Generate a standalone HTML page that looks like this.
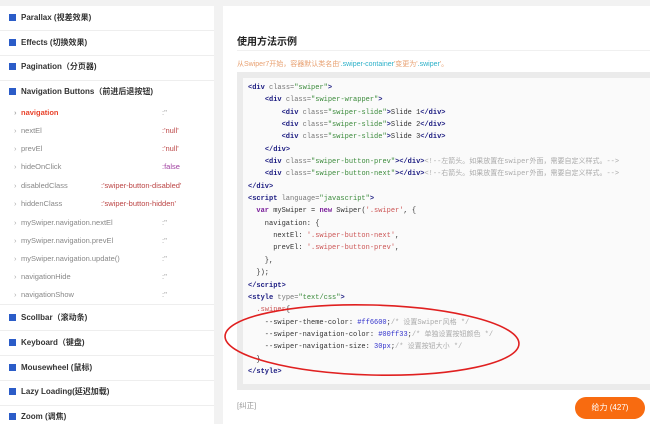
<!DOCTYPE html><html><head><meta charset="utf-8"><style>
*{margin:0;padding:0;box-sizing:border-box}
body{width:650px;height:424px;overflow:hidden;background:#f2f2f2;font-family:"Liberation Sans","Noto Sans CJK SC",sans-serif;position:relative}
#left{position:absolute;left:0;top:6px;width:214px;height:418px;background:#fff}
#right{position:absolute;left:223px;top:6px;width:427px;height:418px;background:#fff}
.sec{position:absolute;left:0;width:214px;font-size:8px;font-weight:bold;color:#333;padding-left:21px;line-height:12px}
.sec:before{content:"";position:absolute;left:9px;top:2px;width:7px;height:7px;background:#2b5cc8}
.line{position:absolute;left:0;width:214px;height:1px;background:#eee}
.it{position:absolute;left:21px;font-size:7.5px;color:#888;line-height:10px}
.it:before{content:"›";position:absolute;left:-7px;color:#aaa}
.v{position:absolute;font-size:7.5px;line-height:10px;color:#b44}
pre{font-family:"Liberation Mono","Noto Sans CJK SC",monospace;font-size:7px;line-height:12.35px;color:#333;font-weight:bold}
.t{color:#1a1a80}.a{color:#777;font-weight:normal}.s{color:#3a8a3a;font-weight:normal}.c{color:#aaa;font-weight:normal}.r{color:#c55;font-weight:normal}.n{font-weight:normal}.k{color:#7a1f9a}.b{color:#3333cc;font-weight:normal}
</style></head><body>
<div id="left">
<div class="sec" style="top:6px">Parallax (视差效果)</div><div class="line" style="top:24px"></div>
<div class="sec" style="top:31px">Effects (切换效果)</div><div class="line" style="top:49px"></div>
<div class="sec" style="top:55px">Pagination（分页器)</div><div class="line" style="top:74px"></div>
<div class="sec" style="top:80px">Navigation Buttons（前进后退按钮)</div>
<div class="it" style="top:102px;color:#e8432b;font-weight:bold">navigation</div><div class="v" style="top:102px;left:162px;color:#999">:''</div>
<div class="it" style="top:120px">nextEl</div><div class="v" style="top:120px;left:162px">:'null'</div>
<div class="it" style="top:138px">prevEl</div><div class="v" style="top:138px;left:162px">:'null'</div>
<div class="it" style="top:156px">hideOnClick</div><div class="v" style="top:156px;left:162px;color:#a040a0">:false</div>
<div class="it" style="top:175px">disabledClass</div><div class="v" style="top:175px;left:101px">:'swiper-button-disabled'</div>
<div class="it" style="top:193px">hiddenClass</div><div class="v" style="top:193px;left:101px">:'swiper-button-hidden'</div>
<div class="it" style="top:212px">mySwiper.navigation.nextEl</div><div class="v" style="top:212px;left:162px;color:#999">:''</div>
<div class="it" style="top:230px">mySwiper.navigation.prevEl</div><div class="v" style="top:230px;left:162px;color:#999">:''</div>
<div class="it" style="top:248px">mySwiper.navigation.update()</div><div class="v" style="top:248px;left:162px;color:#999">:''</div>
<div class="it" style="top:266px">navigationHide</div><div class="v" style="top:266px;left:162px;color:#999">:''</div>
<div class="it" style="top:284px">navigationShow</div><div class="v" style="top:284px;left:162px;color:#999">:''</div>
<div class="line" style="top:298px"></div>
<div class="sec" style="top:306px">Scollbar（滚动条)</div><div class="line" style="top:324px"></div>
<div class="sec" style="top:331px">Keyboard（键盘)</div><div class="line" style="top:349px"></div>
<div class="sec" style="top:356px">Mousewheel (鼠标)</div><div class="line" style="top:374px"></div>
<div class="sec" style="top:380px">Lazy Loading(延迟加载)</div><div class="line" style="top:399px"></div>
<div class="sec" style="top:405px">Zoom (调焦)</div>
</div>
<div id="right">
<div style="position:absolute;left:14px;top:27px;font-size:10px;font-weight:bold;color:#222">使用方法示例</div>
<div style="position:absolute;left:14px;top:44px;width:413px;height:1px;background:#f0f0f0"></div>
<div style="position:absolute;left:14px;top:53px;font-size:7px;color:#e8a070">从Swiper7开始，容器默认类名由'<span style="color:#2bb0c8">.swiper-container</span>'变更为'<span style="color:#2bb0c8">.swiper</span>'。</div>
<div style="position:absolute;left:14px;top:66px;width:413px;height:318px;background:#ebebeb;padding:6px 0 0 6px">
<div style="background:#fafafa;width:100%;height:306px;padding:4px 0 0 5px">
<pre><span class="t">&lt;div</span> <span class="a">class=</span><span class="s">"swiper"</span><span class="t">&gt;</span>
    <span class="t">&lt;div</span> <span class="a">class=</span><span class="s">"swiper-wrapper"</span><span class="t">&gt;</span>
        <span class="t">&lt;div</span> <span class="a">class=</span><span class="s">"swiper-slide"</span><span class="t">&gt;</span><span class="n">Slide 1</span><span class="t">&lt;/div&gt;</span>
        <span class="t">&lt;div</span> <span class="a">class=</span><span class="s">"swiper-slide"</span><span class="t">&gt;</span><span class="n">Slide 2</span><span class="t">&lt;/div&gt;</span>
        <span class="t">&lt;div</span> <span class="a">class=</span><span class="s">"swiper-slide"</span><span class="t">&gt;</span><span class="n">Slide 3</span><span class="t">&lt;/div&gt;</span>
    <span class="t">&lt;/div&gt;</span>
    <span class="t">&lt;div</span> <span class="a">class=</span><span class="s">"swiper-button-prev"</span><span class="t">&gt;&lt;/div&gt;</span><span class="c">&lt;!--左箭头。如果放置在swiper外面，需要自定义样式。--&gt;</span>
    <span class="t">&lt;div</span> <span class="a">class=</span><span class="s">"swiper-button-next"</span><span class="t">&gt;&lt;/div&gt;</span><span class="c">&lt;!--右箭头。如果放置在swiper外面，需要自定义样式。--&gt;</span>
<span class="t">&lt;/div&gt;</span>
<span class="t">&lt;script</span> <span class="a">language=</span><span class="s">"javascript"</span><span class="t">&gt;</span>
  <span class="k">var</span><span class="n"> mySwiper = </span><span class="k">new</span><span class="n"> Swiper(</span><span class="r">'.swiper'</span><span class="n">, {</span>
<span class="n">    navigation: {</span>
<span class="n">      nextEl: </span><span class="r">'.swiper-button-next'</span><span class="n">,</span>
<span class="n">      prevEl: </span><span class="r">'.swiper-button-prev'</span><span class="n">,</span>
<span class="n">    },</span>
<span class="n">  });</span>
<span class="t">&lt;/script&gt;</span>
<span class="t">&lt;style</span> <span class="a">type=</span><span class="s">"text/css"</span><span class="t">&gt;</span>
<span class="r">  .swiper</span><span class="n">{</span>
<span class="n">    --swiper-theme-color: </span><span class="b">#ff6600</span><span class="n">;</span><span class="c">/* 设置Swiper风格 */</span>
<span class="n">    --swiper-navigation-color: </span><span class="b">#00ff33</span><span class="n">;</span><span class="c">/* 单独设置按钮颜色 */</span>
<span class="n">    --swiper-navigation-size: </span><span class="b">30px</span><span class="n">;</span><span class="c">/* 设置按钮大小 */</span>
<span class="n">  }</span>
<span class="t">&lt;/style&gt;</span></pre>
</div></div>
<div style="position:absolute;left:14px;top:394px;font-size:7.5px;color:#999">[纠正]</div>
<div style="position:absolute;left:352px;top:391px;width:70px;height:22px;border-radius:11px;background:#f86b10;color:#fff;font-size:8px;text-align:center;line-height:22px">给力 (427)</div>
</div>
<svg style="position:absolute;left:0;top:0" width="650" height="424"><ellipse cx="372" cy="340" rx="147" ry="35" transform="rotate(1.5 372 340)" fill="none" stroke="#e02020" stroke-width="1.6"/></svg>
</body></html>
